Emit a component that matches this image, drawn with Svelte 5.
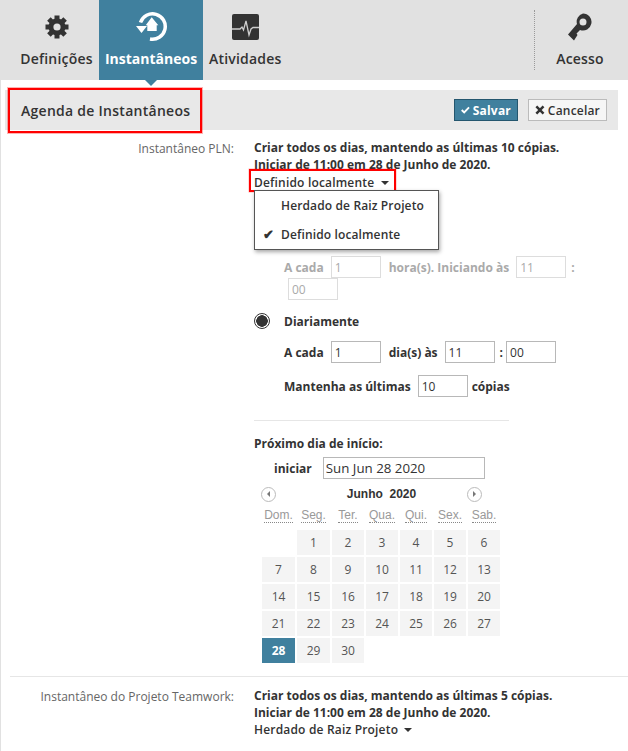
<script lang="ts">
  const tabs = [
    { id: 'settings', label: 'Definições' },
    { id: 'snapshots', label: 'Instantâneos', active: true },
    { id: 'activity', label: 'Atividades' },
  ];
  const weekdays = ['Dom.', 'Seg.', 'Ter.', 'Qua.', 'Qui.', 'Sex.', 'Sab.'];
  const days: (number | null)[] = [null, ...Array.from({ length: 30 }, (_, i) => i + 1)];
  const selectedDay = 28;
</script>

<div class="page">
  <nav class="nav">
    {#each tabs as tab}
      <div class="tab" class:active={tab.active}>
        <div class="icon-box">
          {#if tab.id === 'settings'}
            <svg width="24" height="24" viewBox="0 0 24 24">
              <circle cx="12" cy="12" r="8.500" fill="#333"/>
              <g stroke="#333" stroke-width="5">
                <path d="M12 .5v23M.5 12h23"/>
                <path d="M3.900 3.900l16.200 16.200M20.100 3.900L3.900 20.100"/>
              </g>
              <circle cx="12" cy="12" r="3.600" fill="#e1e1e1"/>
            </svg>
          {:else if tab.id === 'snapshots'}
            <svg class="snap" width="32" height="30" viewBox="0 0 32 30">
              <path fill="none" stroke="#fff" stroke-width="3.500" d="M4.500 10.500A12.700 12.700 0 1 1 14 27"/>
              <path fill="#fff" d="M0 14h11l-5.500 7z"/>
              <path fill="#fff" d="M15.700 5.300l6.600 8h-1.600V19h-9.400v-5.700H9.700z"/>
            </svg>
          {:else}
            <svg width="27" height="26" viewBox="0 0 27 26">
              <rect width="27" height="26" rx="2" fill="#333"/>
              <path fill="none" stroke="#cfcfcf" stroke-width="1.300" d="M0 15h8l2-2 1.500 3L14 7l3 14 2-6 2-1.500h6"/>
            </svg>
          {/if}
        </div>
        <span class="tab-label">{tab.label}</span>
      </div>
    {/each}
    <div class="access">
      <svg width="26" height="28" viewBox="0 0 26 28">
        <path fill="#333" fill-rule="evenodd" d="M16 .5a8.500 8.500 0 1 1-3 16.450L9.500 20.500l1 1.500L7 27.500 1 21.500 10 11A8.500 8.500 0 0 1 16 .5zm0 5a3.500 3.500 0 1 0 0 7 3.500 3.500 0 0 0 0-7z"/>
      </svg>
      <span class="tab-label">Acesso</span>
    </div>
  </nav>

  <div class="pointer"></div>

  <div class="section-bar">
    <h2 class="title">Agenda de Instantâneos</h2>
    <div class="actions">
      <button class="btn save">
        <svg width="12" height="10" viewBox="0 0 12 10"><path fill="none" stroke="#fff" stroke-width="2.600" d="M1 5l3.400 3.400L11 1.500"/></svg>
        Salvar
      </button>
      <button class="btn cancel">
        <svg width="11" height="10" viewBox="0 0 11 10"><path fill="none" stroke="#333" stroke-width="2.800" d="M1.500 1l8 8M9.500 1l-8 8"/></svg>
        Cancelar
      </button>
    </div>
  </div>

  <div class="form">
    <div class="row">
      <div class="label">Instantâneo PLN:</div>
      <div class="value">
        <p class="summary">Criar todos os dias, mantendo as últimas 10 cópias.</p>
        <p class="summary">Iniciar de 11:00 em 28 de Junho de 2020.</p>
        <div class="picker">
          <span class="picker-toggle highlighted">Definido localmente <i class="caret"></i></span>
          <ul class="menu">
            <li>Herdado de Raiz Projeto</li>
            <li><span class="check">✔</span>Definido localmente</li>
          </ul>
        </div>

        <div class="disabled">
          <div class="fields wrap">
            <span>A cada</span><input class="num" value="1" disabled />
            <span class="after">hora(s). Iniciando às</span><input class="num" value="11" disabled />
            <span class="colon">:</span><input class="num last" value="00" disabled />
          </div>
        </div>

        <div class="radio-row">
          <span class="radio"></span>
          <span class="radio-label">Diariamente</span>
        </div>
        <div class="fields daily">
          <span>A cada</span><input class="num" value="1" readonly />
          <span class="after">dia(s) às</span><input class="num" value="11" readonly />
          <span class="colon">:</span><input class="num" value="00" readonly />
        </div>
        <div class="fields keep">
          <span>Mantenha as últimas</span><input class="num" value="10" readonly />
          <span class="after">cópias</span>
        </div>

        <hr class="rule" />

        <div class="next">Próximo dia de início:</div>
        <div class="start">
          <span>iniciar</span>
          <input class="date" value="Sun Jun 28 2020" readonly />
        </div>

        <div class="calendar">
          <div class="cal-head">
            <span class="arrow"><i class="tri left"></i></span>
            <span class="month">Junho&nbsp; 2020</span>
            <span class="arrow"><i class="tri right"></i></span>
          </div>
          <div class="cal-grid">
            {#each weekdays as w}
              <span class="wd"><abbr>{w}</abbr></span>
            {/each}
            {#each days as d}
              {#if d === null}
                <span></span>
              {:else}
                <span class="day" class:selected={d === selectedDay}>{d}</span>
              {/if}
            {/each}
          </div>
        </div>
      </div>
    </div>

    <div class="row teamwork">
      <div class="label">Instantâneo do Projeto Teamwork:</div>
      <div class="value">
        <p class="summary">Criar todos os dias, mantendo as últimas 5 cópias.</p>
        <p class="summary">Iniciar de 11:00 em 28 de Junho de 2020.</p>
        <span class="picker-toggle">Herdado de Raiz Projeto <i class="caret"></i></span>
      </div>
    </div>
  </div>
</div>

<style>
  :global(body) {
    margin: 0;
    background: #fff;
  }
  .page {
    width: 628px;
    height: 751px;
    overflow: hidden;
    font-family: "Open Sans", "Liberation Sans", sans-serif;
    font-size: 12px;
    color: #333;
    box-sizing: border-box;
    border-left: 1px solid #e1e1e1;
  }
  .nav {
    display: flex;
    height: 80px;
    margin-left: -1px;
    background: #e1e1e1;
  }
  .tab {
    display: flex;
    flex-direction: column;
    align-items: center;
    padding: 12px 6px 0;
    box-sizing: border-box;
    height: 80px;
  }
  .tab:first-child { width: 99px; padding: 12px 0 0 14px; }
  .tab:nth-child(2) { width: 104px; }
  .tab.active { background: #40809e; color: #fff; }
  .icon-box {
    height: 30px;
    display: flex;
    align-items: center;
    justify-content: center;
    flex: none;
  }
  .snap { margin-left: 2px; }
  .tab-label {
    margin-top: 7px;
    font-size: 14px;
    font-weight: 600;
    letter-spacing: .2px;
    white-space: nowrap;
  }
  .tab.active .tab-label { font-weight: 700; letter-spacing: 0; }
  .access {
    margin-left: auto;
    margin-right: 3px;
    margin-top: 10px;
    height: 60px;
    width: 91px;
    border-left: 1px dotted #999;
    display: flex;
    flex-direction: column;
    align-items: center;
    padding-top: 3px;
    box-sizing: border-box;
  }
  .access .tab-label { margin-top: 8px; }
  .pointer {
    width: 0;
    height: 0;
    margin-left: 144px;
    border: 6px solid transparent;
    border-top-color: #40809e;
    border-bottom: 0;
    margin-bottom: 4px;
  }
  .section-bar {
    display: flex;
    align-items: center;
    justify-content: space-between;
    height: 40px;
    margin: 0 10px 0 4px;
    background: #e8e8e8;
    padding-right: 11px;
  }
  .title {
    margin: 0 0 0 3px;
    width: 194px;
    height: 45px;
    box-sizing: border-box;
    border: 2px solid #f00;
    box-shadow: 0 0 0 1px rgba(255, 0, 0, .3);
    font-size: 14px;
    font-weight: 600;
    letter-spacing: .27px;
    line-height: 41px;
    padding-left: 11px;
  }
  .actions { display: flex; gap: 10px; }
  .btn {
    display: flex;
    align-items: center;
    gap: 3px;
    height: 22px;
    font: 600 12px "Open Sans", sans-serif;
    letter-spacing: .2px;
    box-sizing: border-box;
  }
  .save { background: #40809e; border: 1px solid #24566e; color: #fff; font-weight: 700; width: 64px; padding: 0 6px; }
  .cancel { background: #f6f6f6; border: 1px solid #bbb; color: #333; width: 79px; padding: 0 6px; }
  .form { padding-top: 9px; }
  .row {
    display: flex;
    margin-left: 9px;
  }
  .label {
    width: 224px;
    text-align: right;
    color: #666;
    flex: none;
    line-height: 18px;
    padding-top: 1px;
  }
  .value {
    margin-left: 20px;
    position: relative;
    flex: 1;
    font-weight: 600;
  }
  .summary {
    margin: 0;
    line-height: 17px;
    font-weight: 700;
  }
  .picker { position: relative; }
  .picker-toggle {
    display: inline-block;
    line-height: 17px;
    font-weight: 600;
    letter-spacing: .18px;
  }
  .picker-toggle.highlighted {
    box-sizing: border-box;
    width: 147px;
    height: 23px;
    margin: -4px 0 0 -5px;
    padding: 3px 0 0 3px;
    border: 2px solid #f00;
    box-shadow: 0 0 0 .5px rgba(255, 0, 0, .3);
  }
  .caret {
    display: inline-block;
    width: 0;
    height: 0;
    margin-left: 3px;
    vertical-align: 2px;
    border: 4px solid transparent;
    border-top-color: #333;
    border-bottom: 0;
  }
  .menu {
    position: absolute;
    left: 0;
    top: 17px;
    margin: 0;
    padding: 0;
    list-style: none;
    width: 185px;
    height: 60px;
    box-sizing: border-box;
    background: #fff;
    border: 1px solid #555;
    box-shadow: 1px 2px 4px rgba(0, 0, 0, .35);
    letter-spacing: .13px;
    z-index: 2;
  }
  .menu li {
    height: 29px;
    line-height: 29px;
    padding-left: 26px;
    position: relative;
    white-space: nowrap;
  }
  .check {
    position: absolute;
    left: 8px;
    font-size: 13px;
  }
  .disabled {
    margin-top: 64px;
    color: #aaa;
    margin-left: 30px;
  }
  .fields {
    display: flex;
    align-items: center;
    margin-left: 30px;
    font-weight: 700;
  }
  .disabled .fields { margin-left: 0; }
  .fields.wrap { flex-wrap: wrap; width: 300px; }
  .num {
    width: 50px;
    height: 22px;
    box-sizing: border-box;
    border: 1px solid #b8b8b8;
    padding: 0 3px;
    margin: 0 0 0 7px;
    font: 400 12px "Open Sans", sans-serif;
    color: #333;
    background: #fff;
    outline: none;
  }
  .num:disabled { border-color: #ddd; color: #aaa; }
  .after { margin-left: 8px; }
  .keep .after { margin-left: 4px; }
  .colon { margin-left: 5px; }
  .colon + .num { margin-left: 3px; }
  .colon + .num.last { margin-left: 4px; }
  .radio-row {
    display: flex;
    align-items: center;
    margin-top: 12px;
    height: 18px;
    font-weight: 700;
  }
  .radio {
    width: 16px;
    height: 16px;
    box-sizing: border-box;
    border-radius: 50%;
    border: 1px solid #333;
    background: radial-gradient(circle, #333 0 5.500px, #fff 6px);
  }
  .radio-label { margin-left: 14px; }
  .daily { margin-top: 11px; }
  .keep { margin-top: 12px; }
  .rule {
    border: 0;
    border-top: 1px solid #e6e6e6;
    margin: 23px 0 0;
    width: 255px;
  }
  .next { margin-top: 14px; font-weight: 700; line-height: 17px; }
  .start {
    display: flex;
    align-items: center;
    margin: 5px 0 0 20px;
    font-weight: 700;
  }
  .date {
    width: 162px;
    height: 22px;
    box-sizing: border-box;
    margin-left: 11px;
    border: 1px solid #b8b8b8;
    padding: 0 2px;
    font: 400 13.300px "Open Sans", sans-serif;
    color: #333;
    outline: none;
  }
  .calendar { margin: 6px 0 0 7px; width: 239px; }
  .cal-head {
    display: flex;
    align-items: center;
    justify-content: space-between;
    height: 18px;
    padding: 0 18px 0 0;
  }
  .month {
    margin-left: 20px;
    font-family: "Liberation Sans", sans-serif;
    font-weight: 700;
    color: #333;
  }
  .arrow {
    width: 15px;
    height: 15px;
    box-sizing: border-box;
    border: 1px solid #bbb;
    border-radius: 50%;
    display: flex;
    align-items: center;
    justify-content: center;
  }
  .tri { width: 0; height: 0; border: 3px solid transparent; }
  .tri.left { border-right-color: #777; border-left: 0; }
  .tri.right { border-left-color: #777; border-right: 0; }
  .cal-grid {
    display: grid;
    grid-template-columns: 33px 33px repeat(5, 32px);
    grid-auto-rows: 25px;
    gap: 2px;
    margin-left: 1px;
  }
  .wd {
    font-size: 12px;
    font-weight: 400;
    color: #999;
    text-align: center;
    line-height: 24px;
    font-family: "Liberation Sans", sans-serif;
  }
  abbr { border-bottom: 1px dotted #888; text-decoration: none; }
  .day {
    background: #f4f4f4;
    text-align: center;
    line-height: 25px;
    font-weight: 400;
    color: #555;
  }
  .day.selected { background: #40809e; color: #fff; font-weight: 700; }
  .teamwork {
    border-top: 1px solid #e6e6e6;
    margin-top: 13px;
    padding-top: 10px;
  }
</style>
